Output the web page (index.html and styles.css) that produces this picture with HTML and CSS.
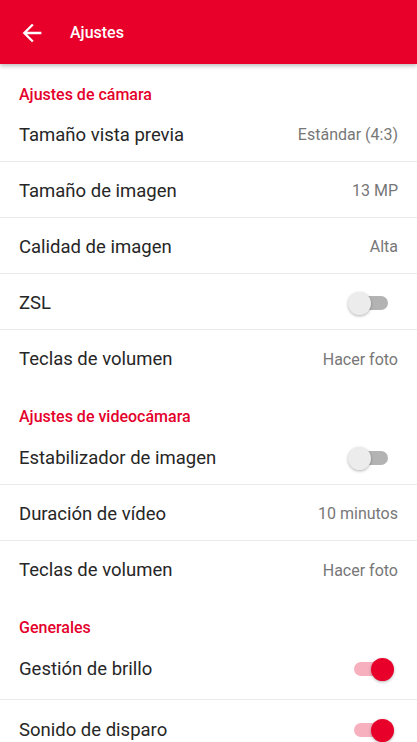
FILE: index.html
```html
<!DOCTYPE html>
<html lang="es">
<head>
<meta charset="utf-8">
<title>Ajustes</title>
<link rel="stylesheet" href="styles.css">
</head>
<body>
<header class="appbar">
  <svg class="back" viewBox="0 0 24 24" width="28" height="28" aria-hidden="true"><path d="M20 11H7.83l5.59-5.59L12 4l-8 8 8 8 1.41-1.41L7.83 13H20v-2z" fill="#fff"/></svg>
  <h1 class="title">Ajustes</h1>
</header>
<main class="list">
  <div class="section first">Ajustes de cámara</div>
  <div class="row"><span class="label">Tamaño vista previa</span><span class="value">Estándar (4:3)</span></div>
  <div class="row"><span class="label">Tamaño de imagen</span><span class="value">13 MP</span></div>
  <div class="row"><span class="label">Calidad de imagen</span><span class="value">Alta</span></div>
  <div class="row"><span class="label">ZSL</span><span class="switch"><span class="track"></span><span class="thumb"></span></span></div>
  <div class="row last"><span class="label">Teclas de volumen</span><span class="value">Hacer foto</span></div>

  <div class="section">Ajustes de videocámara</div>
  <div class="row"><span class="label">Estabilizador de imagen</span><span class="switch"><span class="track"></span><span class="thumb"></span></span></div>
  <div class="row"><span class="label">Duración de vídeo</span><span class="value">10 minutos</span></div>
  <div class="row last"><span class="label">Teclas de volumen</span><span class="value">Hacer foto</span></div>

  <div class="section">Generales</div>
  <div class="row tall"><span class="label">Gestión de brillo</span><span class="switch on"><span class="track"></span><span class="thumb"></span></span></div>
  <div class="row tall last"><span class="label">Sonido de disparo</span><span class="switch on"><span class="track"></span><span class="thumb"></span></span></div>
</main>
</body>
</html>
```
FILE: styles.css
```css
html, body {
  margin: 0;
  padding: 0;
  overflow: hidden;
  background: #fff;
  font-family: Roboto, "Noto Sans", sans-serif;
}
.appbar {
  height: 64px;
  background: #e8002a;
  display: flex;
  align-items: center;
  padding-left: 18px;
  box-shadow: 0 2px 4px rgba(0,0,0,0.25);
  position: relative;
  z-index: 1;
}
.back {
  display: block;
  margin-top: 1px;
}
.title {
  margin: 0 0 0 24px;
  font-size: 16px;
  font-weight: 500;
  color: #fff;
}
.list {
  display: flex;
  flex-direction: column;
}
.section {
  height: 43px;
  box-sizing: border-box;
  padding: 21px 19px 0;
  font-size: 16px;
  font-weight: 500;
  color: #e4002b;
  line-height: 19px;
}
.section.first {
  height: 42px;
}
.row {
  height: 56px;
  box-sizing: border-box;
  border-bottom: 1px solid #e9e9e9;
  display: flex;
  align-items: center;
  justify-content: space-between;
  padding: 2px 19px 0 19px;
}
.row.tall {
  height: 60px;
  padding-top: 0;
  padding-bottom: 1px;
}
.row.last {
  border-bottom: none;
}
.label {
  font-size: 18.5px;
  color: #262626;
}
.value {
  font-size: 16px;
  color: #777;
}
.switch {
  position: relative;
  width: 46px;
  height: 24px;
  margin-right: 4px;
}
.track {
  position: absolute;
  left: 6px;
  top: 5px;
  width: 34px;
  height: 14px;
  border-radius: 7px;
  background: #b3b3b3;
}
.thumb {
  position: absolute;
  left: 0;
  top: 1px;
  width: 23px;
  height: 23px;
  border-radius: 50%;
  background: #ececec;
  box-shadow: 0 1px 3px rgba(0,0,0,0.3);
}
.switch.on .track {
  background: #f7b0bd;
}
.switch.on .thumb {
  left: auto;
  right: 0;
  background: #e8002a;
}
```
